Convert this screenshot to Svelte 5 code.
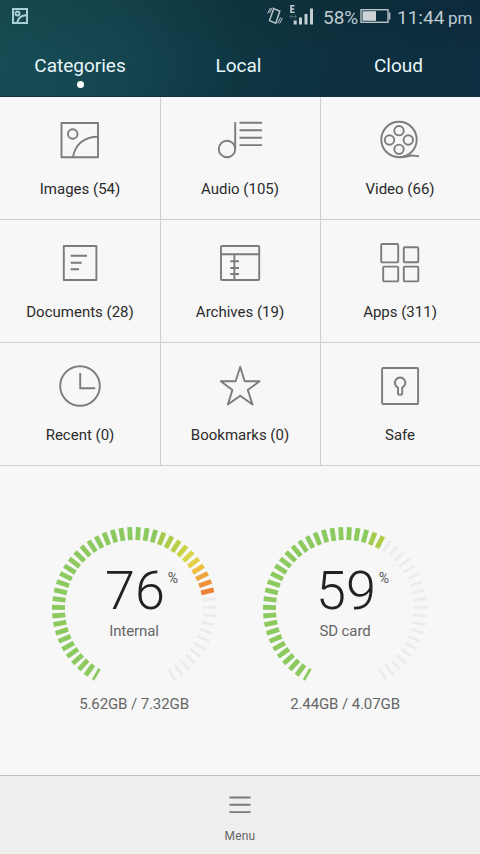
<script lang="ts">
  const tabs = ["Categories", "Local", "Cloud"];
  let activeTab = "Categories";

  const categories = [
    { icon: "images", label: "Images (54)" },
    { icon: "audio", label: "Audio (105)" },
    { icon: "video", label: "Video (66)" },
    { icon: "documents", label: "Documents (28)" },
    { icon: "archives", label: "Archives (19)" },
    { icon: "apps", label: "Apps (311)" },
    { icon: "recent", label: "Recent (0)" },
    { icon: "bookmarks", label: "Bookmarks (0)" },
    { icon: "safe", label: "Safe" },
  ];

  const storages = [
    { name: "Internal", percent: 76, usage: "5.62GB / 7.32GB" },
    { name: "SD card", percent: 59, usage: "2.44GB / 4.07GB" },
  ];

  const TICKS = 50;
  const ticks = Array.from({ length: TICKS }, (_, i) => i);

  // green for most of the dial, then yellow to orange near the end
  const warm = ["#a3cb4e", "#adcd48", "#bbd045", "#c9d344", "#d8d54a", "#e6cf48", "#efbd42", "#f0a63e", "#ef9138", "#ee7f35"];

  function tickColor(i: number, percent: number) {
    if (i >= Math.round((percent * TICKS) / 100)) return "#ebebeb";
    if (i < 28) return "#8cca5f";
    return warm[Math.min(i - 28, warm.length - 1)];
  }
</script>

<div class="screen">
  <header>
    <div class="status">
      <svg class="shot" width="16" height="16" viewBox="0 0 16 16">
        <rect x="1" y="1" width="14" height="14" />
        <circle cx="5.5" cy="5.5" r="2" />
        <path d="M5 15C6 10 9 7.5 15 7" />
      </svg>
      <div class="right">
        <svg class="vibrate" width="16" height="18" viewBox="0 0 16 18">
          <path d="M6.8 1.6l6 2.6-4 12-6.300-2.600z" stroke-width="1.5" />
          <path d="M3.4 1L.6 6.500M5.300.6L2.500 6M15.400 11l-2.800 5.500M13.600 10.500l-2.800 5.800" stroke-width="1" />
        </svg>
        <svg class="signal" width="25" height="22" viewBox="0 0 25 22">
          <path class="edge" d="M5.500 1.800H2v6.400h3.500M2 5h3.200" />
          <path class="dim" d="M1 12.500h6M3 10.500L1 12.500l2 2M5.500 10.500l2 2-2 2" />
          <path class="bars" d="M6.200 16.500v4M11.500 13.500v7M17 10v10.500M22.500 4.500v16" />
        </svg>
        <span class="percent">58%</span>
        <svg class="battery" width="31" height="16" viewBox="0 0 31 16">
          <rect x="1" y="1.7" width="27" height="12.6" fill="none" stroke="#b9c6cb" stroke-width="1.4" />
          <rect x="2.500" y="3.200" width="13.500" height="9.600" fill="#ccd4d8" />
          <path d="M29.6 4.5v7" stroke="#b9c6cb" stroke-width="1.4" />
        </svg>
        <span class="time">11:44 <small>pm</small></span>
      </div>
    </div>
    <nav>
      {#each tabs as tab}
        <button class:active={tab === activeTab} on:click={() => (activeTab = tab)}>{tab}</button>
      {/each}
    </nav>
  </header>

  <main>
    <section class="grid">
      {#each categories as category}
        <div class="cell">
          <svg class="icon" width="48" height="48" viewBox="0 0 48 48">
            {#if category.icon === "images"}
              <rect x="5.5" y="7" width="36.5" height="34.2" />
              <circle cx="16.7" cy="18" r="4.8" />
              <path d="M17 41C19 28.5 28 20.7 42 20.7" />
            {:else if category.icon === "audio"}
              <circle cx="11" cy="33" r="8.2" />
              <path d="M19.2 6v27M23.5 6.8H46M23.5 14.3H46M23.5 21.7H46M23.5 29.1H46" />
            {:else if category.icon === "video"}
              <circle cx="23" cy="23.5" r="17.7" />
              <circle cx="23" cy="14.7" r="4.7" />
              <circle cx="13.5" cy="24" r="4.7" />
              <circle cx="32.3" cy="24" r="4.7" />
              <circle cx="23" cy="33.3" r="4.7" />
              <path d="M24 41.2c6 0 8-1.7 12-1.7 3 0 4 .8 7 .8" />
            {:else if category.icon === "documents"}
              <rect x="7.8" y="7" width="32.6" height="34" />
              <path d="M14.7 16.8H31M14.7 23.7h11M14.7 30.3H23" />
            {:else if category.icon === "archives"}
              <rect x="5" y="7" width="38.2" height="34" rx="1" />
              <path d="M5 15.3h38.2M18.4 15.3V41M14.3 22.3H23M14.3 29H23M14.3 35H23" />
            {:else if category.icon === "apps"}
              <rect x="5.2" y="5" width="17" height="18.4" rx="1" />
              <rect x="27.8" y="8.2" width="14.5" height="15" rx="1" />
              <rect x="7.2" y="27.6" width="15" height="14.8" rx="1" />
              <rect x="27.8" y="27.6" width="14.5" height="14.8" rx="1" />
            {:else if category.icon === "recent"}
              <circle cx="24" cy="24" r="19.8" />
              <path d="M24.2 11v15.2h15" />
            {:else if category.icon === "bookmarks"}
              <path d="M24.2 5L28.7 19.3H43.5L31.8 28L36.5 42.6L24.2 33.8L11.9 42.6L16.4 28L4.8 19.3H19.6Z" />
            {:else}
              <rect x="6.1" y="6" width="36" height="36" rx="1" />
              <path d="M22 25.5a5.2 5.2 0 1 1 4.2 0V31.5a2.1 1.3 0 0 1-4.2 0z" />
            {/if}
          </svg>
          <span>{category.label}</span>
        </div>
      {/each}
    </section>

    <section class="storage">
      {#each storages as storage}
        <div class="gauge">
          <div class="dial">
            <svg width="170" height="170" viewBox="-85 -85 170 170">
              {#each ticks as i}
                <line
                  y1="-82"
                  y2="-69"
                  stroke={tickColor(i, storage.percent)}
                  stroke-width={i === 0 || i >= (storage.percent * TICKS) / 100 ? 2.6 : 4.8}
                  transform="rotate({-150 + (i * 300) / (TICKS - 1)})"
                />
              {/each}
            </svg>
            <div class="value">
              <div class="number">{storage.percent}<sup>%</sup></div>
              <div class="name">{storage.name}</div>
            </div>
          </div>
          <div class="usage">{storage.usage}</div>
        </div>
      {/each}
    </section>
  </main>

  <footer>
    <svg width="22" height="18" viewBox="0 0 22 18">
      <path d="M0.5 1.5h21M0.5 8.8h21M0.5 16.1h21" />
    </svg>
    <span>Menu</span>
  </footer>
</div>

<style>
  :global(body) {
    background: #f7f7f7;
  }

  .screen {
    width: 480px;
    height: 854px;
    display: flex;
    flex-direction: column;
    background: #f7f7f7;
    font-family: Roboto, sans-serif;
    overflow: hidden;
  }

  svg {
    display: block;
    flex: none;
  }

  header {
    height: 97px;
    box-sizing: border-box;
    border-bottom: 1px solid #182e38;
    background:
      linear-gradient(180deg, rgba(0, 0, 0, 0.08), transparent 60%),
      linear-gradient(100deg, #184d54 0%, #154650 25%, #0e3742 50%, #0d303e 70%, #0e2d40 100%);
  }

  .status {
    height: 34px;
    display: flex;
    justify-content: space-between;
    padding: 0 8px 0 12px;
    color: #bdcbd0;
  }

  .shot {
    margin-top: 8px;
    fill: none;
    stroke: #a9d0d5;
    stroke-width: 2;
  }

  .right {
    display: flex;
    align-items: flex-start;
  }

  .vibrate {
    margin: 7px 6px 0 0;
    fill: none;
    stroke: #b9c6cb;
  }

  .signal {
    margin: 4px 9px 0 0;
    fill: none;
    stroke: #c3ced2;
  }

  .edge {
    stroke-width: 1.6;
  }

  .dim {
    stroke: #4d6972;
  }

  .bars {
    stroke-width: 3;
  }

  .percent,
  .time {
    margin-top: 5px;
    font-size: 19px;
    line-height: 25px;
    white-space: nowrap;
  }

  .percent {
    width: 37px;
  }

  .battery {
    margin: 8px 6px 0 0;
  }

  .time {
    width: 75px;
  }

  small {
    font-size: 17px;
    margin-left: -1px;
  }

  nav {
    height: 62px;
    display: grid;
    grid-template-columns: repeat(3, 1fr);
  }

  button {
    display: flex;
    flex-direction: column;
    align-items: center;
    padding: 19px 3px 0 0;
    border: none;
    background: none;
    color: #e8f6fa;
    font: 19px/25px Roboto, sans-serif;
  }

  .active {
    padding-right: 0;
  }

  .active::after {
    content: "";
    width: 7px;
    height: 7px;
    margin: 3px 0 0 1px;
    border-radius: 50%;
    background: #fff;
  }

  main {
    flex: 1;
  }

  .grid {
    display: grid;
    grid-template-columns: repeat(3, 160px);
    grid-auto-rows: 123px;
  }

  .cell {
    box-sizing: border-box;
    display: flex;
    flex-direction: column;
    align-items: center;
    padding-top: 19px;
    border-bottom: 1px solid #cecece;
    color: #2b2b2b;
    font-size: 15px;
    line-height: 20px;
  }

  .cell:not(:nth-child(3n + 1)) {
    box-shadow: inset 1px 0 #cecece;
  }

  .cell span {
    margin-top: 15px;
  }

  .icon {
    fill: none;
    stroke: #7c7c7c;
    stroke-width: 1.9;
    stroke-linejoin: round;
  }

  .storage {
    display: flex;
    justify-content: center;
    gap: 41px;
    padding: 58px 1px 0 0;
  }

  .gauge {
    width: 170px;
    text-align: center;
  }

  .dial {
    display: grid;
  }

  .dial > * {
    grid-area: 1 / 1;
  }

  .number {
    display: flex;
    justify-content: center;
    padding: 36px 0 0 18px;
    color: #222;
    font-size: 54px;
    font-weight: 300;
    line-height: 62px;
  }

  sup {
    width: 16px;
    margin-top: 8px;
    color: #555;
    font-size: 14px;
    font-weight: 400;
    line-height: 20px;
  }

  .name,
  .usage {
    color: #666;
    font-size: 15px;
    line-height: 20px;
    letter-spacing: -0.1px;
  }

  .name {
    margin-top: -1px;
  }

  footer {
    height: 79px;
    box-sizing: border-box;
    display: flex;
    flex-direction: column;
    align-items: center;
    padding-top: 20px;
    border-top: 1px solid #c2c2c2;
    background: #efefef;
    color: #666;
    font-size: 12px;
    line-height: 16px;
    letter-spacing: 0.2px;
  }

  footer svg {
    fill: none;
    stroke: #777;
    stroke-width: 1.9;
  }

  footer span {
    margin-top: 14px;
  }
</style>
